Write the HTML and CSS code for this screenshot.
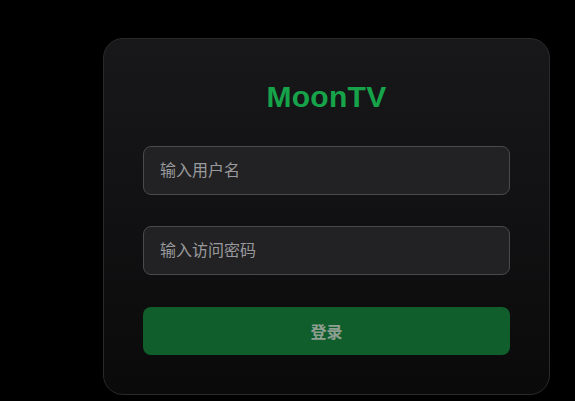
FILE: index.html
```html
<!DOCTYPE html>
<html lang="zh-CN">
<head>
    <meta charset="UTF-8">
    <meta name="viewport" content="width=device-width, initial-scale=1.0">
    <title>MoonTV 登录</title>
    <link rel="stylesheet" href="styles.css">
</head>
<body>
    <div class="login-page">
        <div class="login-card">
            <h1 class="login-title">MoonTV</h1>
            <form class="login-form" onsubmit="return false">
                <input type="text" class="login-input" placeholder="输入用户名">
                <input type="password" class="login-input" placeholder="输入访问密码">
                <button type="submit" class="login-button" disabled>登录</button>
            </form>
        </div>
    </div>
</body>
</html>
```

FILE: styles.css
```css
:root {
    --green: #16a34a;
    --green-dark: #115e2d;
    --card-top: #18181a;
    --card-bottom: #0a0a0b;
}

* {
    margin: 0;
    padding: 0;
    box-sizing: border-box;
    font-family: 'Liberation Sans', 'Noto Sans CJK SC', sans-serif;
}

body {
    background: #000;
    min-height: 100vh;
}

.login-page {
    display: flex;
    padding: 38px 25px 0 103px;
}

.login-card {
    width: 448px;
    padding: 39px;
    border: 1px solid #2a2a2c;
    border-radius: 20px;
    background: linear-gradient(180deg, var(--card-top) 0%, var(--card-bottom) 100%);
}

.login-title {
    color: var(--green);
    font-size: 30px;
    line-height: 36px;
    font-weight: 700;
    letter-spacing: 0.3px;
    text-align: center;
    margin-top: 1px;
    margin-bottom: 31px;
}

.login-form {
    display: flex;
    flex-direction: column;
    gap: 31px;
}

.login-input {
    width: 100%;
    height: 49px;
    padding: 0 16px;
    background: #222224;
    border: 1px solid #4a4a4e;
    border-radius: 8px;
    color: #e5e5e5;
    font-size: 16px;
    outline: none;
}

.login-input::placeholder {
    color: #9a9a9e;
}

.login-button {
    height: 48px;
    margin-top: 1px;
    border: none;
    border-radius: 8px;
    background: var(--green-dark);
    color: #8e9e90;
    font-size: 16px;
    font-weight: 700;
}
```
